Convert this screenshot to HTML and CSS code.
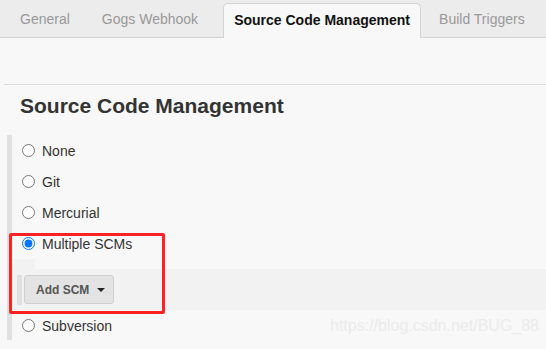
FILE: index.html
```html
<!DOCTYPE html>
<html>
<head>
<meta charset="utf-8">
<link rel="stylesheet" href="styles.css">
</head>
<body>
<div class="tabs">
  <div class="tab t-general">General</div>
  <div class="tab t-gogs">Gogs Webhook</div>
  <div class="tab active">Source Code Management</div>
  <div class="tab t-build">Build Triggers</div>
</div>
<div class="section">
  <h2 class="title">Source Code Management</h2>
  <div class="options">
    <label class="opt"><input type="radio" name="scm"><span>None</span></label>
    <label class="opt"><input type="radio" name="scm"><span>Git</span></label>
    <label class="opt"><input type="radio" name="scm"><span>Mercurial</span></label>
    <label class="opt"><input type="radio" name="scm" checked><span>Multiple SCMs</span></label>
    <div class="nested">
      <div class="nested-top"></div>
      <div class="nested-body">
        <div class="nested-bar"></div>
        <button class="btn">Add SCM <span class="caret"></span></button>
      </div>
    </div>
    <label class="opt"><input type="radio" name="scm"><span>Subversion</span></label>
  </div>
</div>
<div class="annot"></div>
<div class="watermark">https://blog.csdn.net/BUG_88</div>
</body>
</html>
```
FILE: styles.css
```css
html, body {
  margin: 0;
  padding: 0;
  background: #f8f8f8;
  font-family: "Liberation Sans", Arial, sans-serif;
  color: #333;
  height: 349px;
  overflow: hidden;
  position: relative;
}
.tabs {
  display: flex;
  align-items: flex-end;
  height: 38px;
  background: #ececec;
  border-bottom: 1px solid #d3d3d3;
  box-sizing: border-box;
  padding-left: 8px;
}
.tab {
  font-size: 14px;
  color: #999;
  padding: 0 12px;
  height: 34px;
  line-height: 33px;
  box-sizing: border-box;
}
.t-gogs { margin-left: 8px; }
.tab.active {
  margin-left: 13px;
  color: #111;
  font-weight: bold;
  background: #f8f8f8;
  border: 1px solid #d3d3d3;
  border-bottom: none;
  border-radius: 5px 5px 0 0;
  height: 35px;
  margin-bottom: -1px;
  width: 198px;
  text-align: center;
  padding: 0;
}
.t-build { margin-left: 6px; }
.section {
  margin: 46px 0 0 4px;
  border-top: 1px solid #dcdcdc;
}
.title {
  margin: 0;
  padding: 8px 0 0 16px;
  font-size: 21px;
  line-height: 25px;
  font-weight: bold;
  color: #333;
}
.options {
  margin: 17px 0 0 3px;
  border-left: 5px solid #e0e0e0;
  height: 205px;
  box-sizing: border-box;
}
.opt {
  display: flex;
  align-items: center;
  height: 31px;
  font-size: 14px;
  color: #333;
}
.opt input {
  margin: 0 7px 0 10px;
  width: 13px;
  height: 13px;
}
.nested-top {
  width: 23px;
  height: 10px;
  background: #f2f2f2;
}
.nested-body {
  display: flex;
  align-items: center;
  background: #f2f2f2;
  height: 41px;
  padding-left: 5px;
}
.nested-bar {
  width: 5px;
  height: 30px;
  background: #e0e0e0;
  margin-right: 2px;
}
.btn {
  display: flex;
  align-items: center;
  height: 29px;
  width: 90px;
  box-sizing: border-box;
  padding: 0 0 0 11px;
  background: #e3e3e3;
  border: 1px solid #cfcfcf;
  border-radius: 3px;
  font-family: "Liberation Sans", Arial, sans-serif;
  font-size: 12px;
  font-weight: bold;
  color: #555;
}
.caret {
  margin-left: 8px;
  width: 0;
  height: 0;
  border-left: 4px solid transparent;
  border-right: 4px solid transparent;
  border-top: 4px solid #222;
  margin-top: 1px;
}
.annot {
  position: absolute;
  left: 9px;
  top: 233px;
  width: 156px;
  height: 81px;
  box-sizing: border-box;
  border: 3px solid #ff2222;
  border-radius: 2px;
  pointer-events: none;
}
.watermark {
  position: absolute;
  left: 330px;
  top: 317px;
  font-size: 16px;
  color: #ebebeb;
  font-family: "Liberation Sans", Arial, sans-serif;
}
```
